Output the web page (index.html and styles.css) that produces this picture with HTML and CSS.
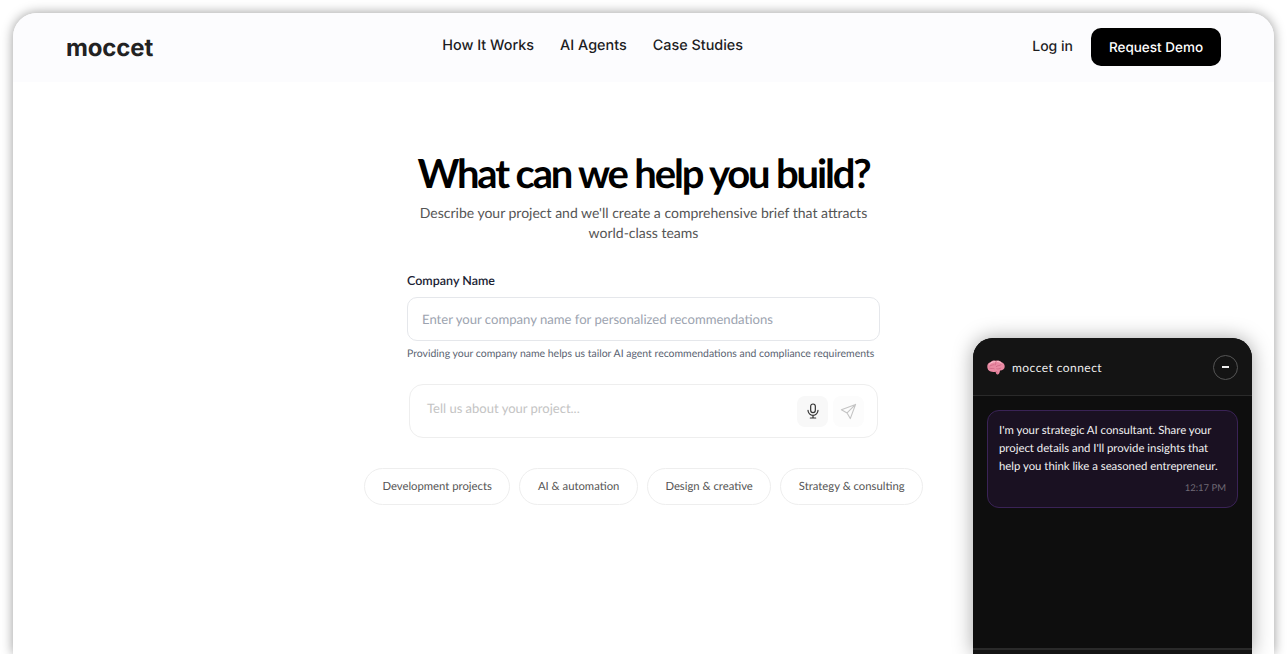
FILE: index.html
```html
<!DOCTYPE html>
<html lang="en">
<head>
    <meta charset="UTF-8">
    <title>moccet</title>
    <link rel="stylesheet" href="styles.css">
</head>
<body>
    <div class="window">
        <header class="topbar">
            <div class="logo">moccet</div>
            <nav class="nav">
                <a>How It Works</a>
                <a>AI Agents</a>
                <a>Case Studies</a>
            </nav>
            <div class="actions">
                <a class="login">Log in</a>
                <button class="demo">Request Demo</button>
            </div>
        </header>

        <main class="main">
            <h1>What can we help you build?</h1>
            <p class="lead">Describe your project and we'll create a comprehensive brief that attracts<br>world-class teams</p>

            <div class="form-group">
                <label for="company">Company Name</label>
                <input type="text" id="company" placeholder="Enter your company name for personalized recommendations">
                <p class="hint">Providing your company name helps us tailor AI agent recommendations and compliance requirements</p>
            </div>

            <div class="prompt">
                <span class="prompt-text">Tell us about your project...</span>
                <span class="icon-btn">
                    <svg width="16" height="16" viewBox="0 0 24 24" fill="none" stroke="#333" stroke-width="1.8" stroke-linecap="round" stroke-linejoin="round">
                        <rect x="8.5" y="1.5" width="7" height="13" rx="3.5"/>
                        <path d="M4.5 11a7.5 7.5 0 0 0 15 0M12 18.5v4M8 22.5h8"/>
                    </svg>
                </span>
                <span class="icon-btn faint">
                    <svg width="17" height="17" viewBox="0 0 24 24" fill="none" stroke="#c4c4c4" stroke-width="1.6" stroke-linejoin="round" stroke-linecap="round">
                        <path d="M22 2 2 9.5l8 4.5 4.5 8zM22 2 10 14"/>
                    </svg>
                </span>
            </div>

            <div class="chips">
                <span class="chip">Development projects</span>
                <span class="chip">AI &amp; automation</span>
                <span class="chip">Design &amp; creative</span>
                <span class="chip">Strategy &amp; consulting</span>
            </div>
        </main>

        <aside class="chat">
            <div class="chat-head">
                <svg class="brain" width="18" height="15" viewBox="0 0 18 15">
                    <path d="M.3 7C0 4.500 1.500 2.600 3.500 2.200 4.500.7 7 .2 8.800.8 10.500.1 13 .5 14.200 2 16.300 2.600 18 4.600 17.700 7 17.400 9.300 15.400 10.600 13 10.500 12.800 12.300 12.300 14.200 10.800 14.400 9.500 14.600 9 13.200 8.500 11.700 6 12.300 3 11.800 1.600 10.300.9 9.500.4 8.300.3 7Z" fill="#ea8aa3"/>
                    <path d="M3 6c1.500-1.500 3-.6 4.200-1.500M9.300 6.500c1.500-1.400 3.300-.4 4.900-1.900M2.800 8.300c1.700.7 3-.4 4.400.4M9.800 8.800c1.200.4 2.700.1 4-.7M8.600 2.500c.3 1 .1 1.800-.3 2.500" fill="none" stroke="#c9627f" stroke-width=".7" stroke-linecap="round"/>
                    <path d="M2.500 4C4 2.500 6 1.500 8 1.700M10.500 1.500c1.300 0 2.700.5 3.700 1.500" fill="none" stroke="#fbd0da" stroke-width=".9" stroke-linecap="round"/>
                    <path d="M9.500 11.500c.3 1 .8 1.900 1.500 1.900" fill="none" stroke="#c9627f" stroke-width=".7" stroke-linecap="round"/>
                </svg>
                <span class="chat-title">moccet connect</span>
                <span class="minimize"><i></i></span>
            </div>
            <div class="chat-body">
                <div class="bubble">
                    <p>I'm your strategic AI consultant. Share your project details and I'll provide insights that help you think like a seasoned entrepreneur.</p>
                    <div class="time">12:17 PM</div>
                </div>
            </div>
            <div class="chat-foot"></div>
        </aside>
    </div>
</body>
</html>
```

FILE: styles.css
```css
html, body {
    height: 100%;
}
body {
    margin: 0;
    background: #fff;
    font-family: "Lato", sans-serif;
    text-rendering: geometricPrecision;
    overflow: hidden;
    padding: 13px 13px 0;
    box-sizing: border-box;
}
.window {
    position: relative;
    height: 641px;
    background: #fff;
    border-radius: 24px 24px 0 0;
    box-shadow: 0 0 12px rgba(0,0,0,0.4);
    overflow: hidden;
}
.topbar {
    height: 69px;
    background: #fcfcfe;
    display: flex;
    justify-content: space-between;
    align-items: center;
    padding: 0 53px;
    font-family: "Inter", sans-serif;
    font-weight: 500;
    color: #1d1d1f;
}
.logo {
    font-size: 24px;
    font-weight: 700;
    letter-spacing: -0.15px;
    color: #222;
}
.nav {
    display: flex;
    gap: 26px;
    font-size: 14.4px;
    margin-bottom: 5px;
}
.actions {
    display: flex;
    align-items: center;
    gap: 18px;
}
.login {
    font-size: 14px;
    margin-bottom: 3px;
}
.demo {
    width: 130px;
    height: 38px;
    margin-bottom: 1px;
    padding: 2px 0 0;
    border: none;
    border-radius: 10px;
    background: #000;
    color: #fff;
    font: 500 13.5px "Inter", sans-serif;
    text-rendering: geometricPrecision;
}
.main {
    display: flex;
    flex-direction: column;
    align-items: center;
    padding-top: 67px;
}
h1 {
    margin: 0;
    font-size: 40px;
    line-height: 48px;
    font-weight: 700;
    letter-spacing: -2.15px;
    color: #000;
}
.lead {
    margin: 6px 0 0;
    font-size: 14px;
    line-height: 20px;
    text-align: center;
    color: #555;
}
.form-group {
    width: 473px;
    margin-top: 30px;
}
label {
    display: block;
    font-size: 12.5px;
    font-weight: 600;
    line-height: 16px;
    color: #1a2233;
    margin-bottom: 8px;
}
input[type="text"] {
    display: block;
    width: 100%;
    height: 44px;
    padding: 0 14px;
    border: 1px solid #e5e7eb;
    border-radius: 10px;
    box-sizing: border-box;
    background: #fff;
    font: 13.1px "Lato", sans-serif;
    text-rendering: geometricPrecision;
}
input::placeholder {
    color: #9ca3af;
    opacity: 1;
}
.hint {
    margin: 6px 0 0;
    font-size: 10.47px;
    line-height: 14px;
    color: #5b6472;
    white-space: nowrap;
}
.prompt {
    width: 469px;
    height: 54px;
    margin-top: 23px;
    box-sizing: border-box;
    border: 1px solid #eee;
    border-radius: 14px;
    display: flex;
    align-items: center;
    gap: 5px;
    padding: 0 13px 0 17px;
}
.prompt-text {
    flex: 1;
    font-size: 13px;
    color: #c4c4c4;
    margin-bottom: 6px;
}
.icon-btn {
    width: 31px;
    height: 31px;
    border-radius: 8px;
    background: #f8f8f8;
    display: flex;
    align-items: center;
    justify-content: center;
}
.icon-btn.faint {
    background: #fcfcfc;
}
.chips {
    display: flex;
    gap: 9px;
    margin-top: 30px;
}
.chip {
    height: 37px;
    box-sizing: border-box;
    border: 1px solid #eee;
    border-radius: 19px;
    padding: 0 17.5px;
    display: flex;
    align-items: center;
    font-size: 11.3px;
    color: #555;
}
.chat {
    position: absolute;
    left: 960px;
    top: 325px;
    width: 279px;
    height: 316px;
    background: #0e0e0e;
    border-radius: 20px 20px 0 0;
    box-shadow: 0 0 20px rgba(0,0,0,0.35);
    color: #fff;
    display: flex;
    flex-direction: column;
}
.chat-head {
    height: 58px;
    box-sizing: border-box;
    background: #141414;
    border-bottom: 1px solid #2a2a2a;
    border-radius: 20px 20px 0 0;
    display: flex;
    align-items: center;
    padding: 1px 14px 0 14px;
    gap: 7px;
}
.chat-title {
    flex: 1;
    font-size: 12px;
    letter-spacing: 0.45px;
    color: #eee;
}
.minimize {
    width: 25px;
    height: 25px;
    box-sizing: border-box;
    border: 1px solid #555;
    border-radius: 50%;
    display: flex;
    align-items: center;
    justify-content: center;
}
.minimize i {
    width: 7px;
    height: 1.5px;
    background: #eee;
}
.chat-body {
    height: 252px;
    padding: 14px 14px 0;
    box-sizing: border-box;
}
.bubble {
    box-sizing: border-box;
    height: 98px;
    padding: 11px 11px 0;
    background: #1a1122;
    border: 1px solid #3a2356;
    border-radius: 12px;
}
.bubble p {
    margin: 0;
    font-size: 11.35px;
    line-height: 18px;
    color: #f2f2f2;
}
.time {
    margin-top: 7px;
    font-size: 9.5px;
    line-height: 12px;
    text-align: right;
    color: #6f6a75;
}
.chat-foot {
    flex: 1;
    border-top: 2px solid #2a2a2a;
    background: #141414;
}
```
